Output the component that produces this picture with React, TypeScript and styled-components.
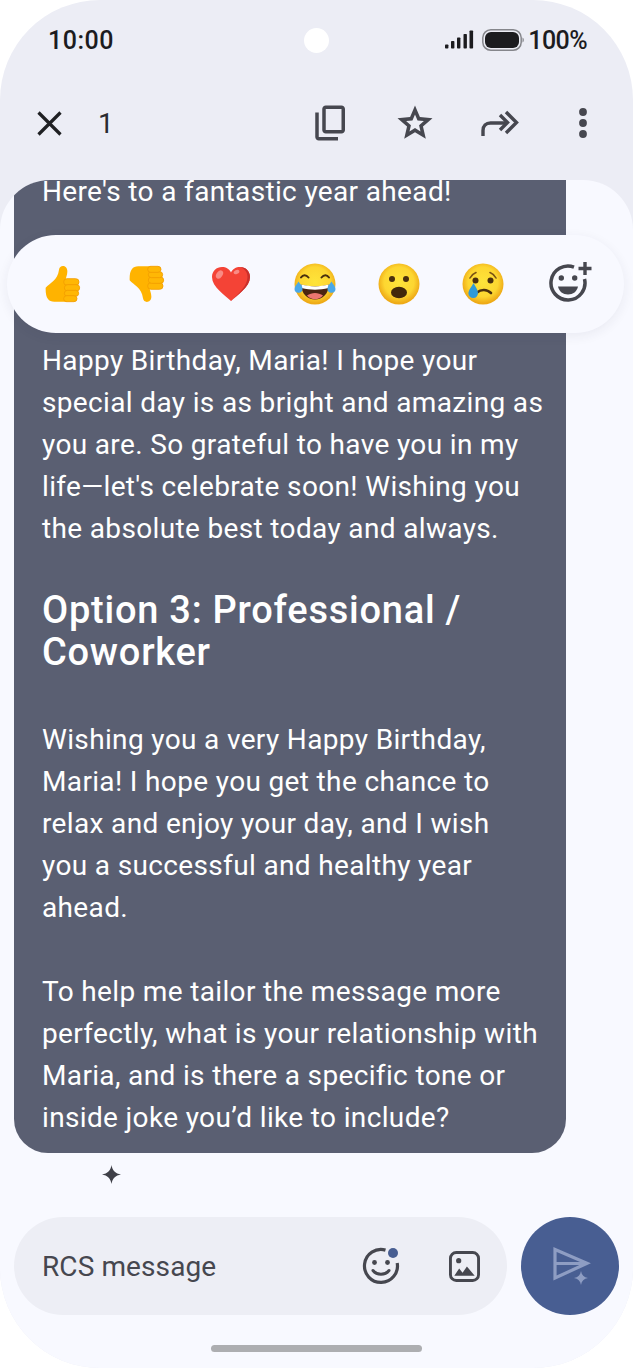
import React from 'react';
import styled, { createGlobalStyle } from 'styled-components';

const GlobalStyle = createGlobalStyle`
  html, body {
    margin: 0;
    padding: 0;
    background: #ffffff;
  }
  * {
    box-sizing: border-box;
  }
`;

const Phone = styled.div`
  width: 633px;
  height: 1368px;
  display: flex;
  flex-direction: column;
  overflow: hidden;
  border-radius: 100px;
  background: #ecedf5;
  font-family: Roboto, 'Noto Sans', sans-serif;
  color: #1c1c1f;
`;

const StatusBar = styled.div`
  height: 80px;
  flex-shrink: 0;
  display: grid;
  grid-template-columns: 1fr 25px 1fr;
  align-items: center;
  padding: 0 46px 0 48px;
  font-size: 25px;
  font-weight: 500;
`;

const Clock = styled.span`
  letter-spacing: 0.5px;
`;

const Camera = styled.div`
  width: 25px;
  height: 25px;
  border-radius: 50%;
  background: #ffffff;
  margin-left: -1px;
`;

const StatusRight = styled.div`
  display: flex;
  align-items: center;
  justify-content: flex-end;
  gap: 7px;
`;

const Percent = styled.span`
  margin-left: -3px;
  letter-spacing: -0.6px;
`;

const ActionBar = styled.div`
  height: 100px;
  flex-shrink: 0;
  display: flex;
  align-items: center;
  padding: 0 8px 14px 37px;
`;

const CountLabel = styled.span`
  margin-left: 36px;
  font-size: 28px;
  flex: 1;
  color: #2a2b30;
`;

const ActionButton = styled.div`
  width: 84px;
  display: flex;
  justify-content: center;
  color: #46474f;
`;

const Panel = styled.div`
  position: relative;
  flex: 1;
  min-height: 0;
  display: flex;
  flex-direction: column;
  overflow: hidden;
  border-radius: 50px 50px 0 0;
  background: #f8f9ff;
`;

const Thread = styled.div`
  flex: 1;
  min-height: 0;
  display: flex;
  flex-direction: column;
  justify-content: flex-end;
  padding: 0 67px 0 14px;
`;

const Bubble = styled.div`
  flex-shrink: 0;
  padding: 0 20px 14px 28px;
  border-radius: 0 0 34px 34px;
  background: #5a5f72;
  color: #ffffff;
  font-size: 28px;
  line-height: 42px;
  letter-spacing: 0.35px;
  white-space: nowrap;
`;

const Paragraph = styled.p<{ $gap?: number }>`
  margin: 0 0 ${(p) => p.$gap ?? 0}px;
`;

const Heading = styled.h2`
  margin: 39px 0 46px;
  font-size: 38px;
  line-height: 42px;
  font-weight: 500;
  letter-spacing: 0.75px;
`;

const ReactionBar = styled.div`
  position: absolute;
  top: 55px;
  left: 7px;
  width: 617px;
  height: 98px;
  display: flex;
  align-items: center;
  padding-left: 14px;
  border-radius: 49px;
  background: #f8f9ff;
  box-shadow: 0 3px 12px rgba(40, 44, 70, 0.07);
`;

const ReactionItem = styled.div`
  width: 84px;
  display: flex;
  justify-content: center;
`;

const AddReactionItem = styled(ReactionItem)`
  padding-left: 8px;
`;

const HintRow = styled.div`
  height: 64px;
  flex-shrink: 0;
  padding: 12px 0 0 102px;
  color: #3f4048;
`;

const Composer = styled.div`
  height: 98px;
  flex-shrink: 0;
  display: flex;
  gap: 14px;
  padding: 0 14px;
`;

const InputPill = styled.div`
  flex: 1;
  display: flex;
  align-items: center;
  padding: 0 27px 0 28px;
  border-radius: 49px;
  background: #edeef5;
  color: #46474f;
  font-size: 28px;
  letter-spacing: 0.1px;
`;

const Placeholder = styled.span`
  flex: 1;
`;

const InputIcons = styled.div`
  display: flex;
  align-items: center;
  gap: 48px;
`;

const SendButton = styled.div`
  width: 98px;
  height: 98px;
  display: flex;
  align-items: center;
  justify-content: center;
  border-radius: 50%;
  background: #485e92;
  color: #8e9dc3;
`;

const HomeBar = styled.div`
  width: 211px;
  height: 7px;
  flex-shrink: 0;
  margin: 30px auto 16px;
  border-radius: 4px;
  background: #adaeb1;
`;

const FlipSvg = styled.svg<{ $flip?: boolean }>`
  display: block;
  transform: ${(p) => (p.$flip ? 'scaleY(-1)' : 'none')};
`;

const SignalIcon = () => (
  <svg width="30" height="20" viewBox="0 0 30 20" fill="#1c1c1f">
    <rect x="0" y="14.5" width="3.4" height="4" rx="0.8" />
    <rect x="6" y="11" width="3.4" height="7.5" rx="0.8" />
    <rect x="12" y="7.5" width="3.4" height="11" rx="0.8" />
    <rect x="18.5" y="4" width="3.4" height="14.5" rx="0.8" />
    <rect x="24.5" y="0.5" width="3.6" height="18" rx="0.8" />
  </svg>
);

const BatteryIcon = () => (
  <svg width="42" height="22" viewBox="0 0 42 22">
    <rect x="0.8" y="0.8" width="38.4" height="20.4" rx="8" fill="none" stroke="#85868b" strokeWidth="1.5" />
    <rect x="3" y="3" width="34" height="16" rx="6" fill="#1c1c1f" />
    <path d="M40.5 8.5c1 .6 1.3 1.5 1.3 2.5s-.3 1.900-1.300 2.500z" fill="#85868b" />
  </svg>
);

const CloseIcon = () => (
  <svg width="25" height="25" viewBox="0 0 25 25" stroke="#1f2023" strokeWidth="3.2" fill="none">
    <path d="M1.500 1.500l22 22M23.500 1.500l-22 22" />
  </svg>
);

const CopyIcon = () => (
  <svg width="42" height="42" viewBox="0 0 24 24" fill="currentColor">
    <path d="M9 18q-.825 0-1.413-.588T7 16V4q0-.825.587-1.413T9 2h9q.825 0 1.413.587T20 4v12q0 .825-.587 1.413T18 18zm0-2h9V4H9zm-4 6q-.825 0-1.413-.588T3 20V6h2v14h11v2z" />
  </svg>
);

const StarIcon = () => (
  <svg width="42" height="42" viewBox="0 0 24 24" fill="currentColor">
    <path d="m8.850 16.825 3.150-1.900 3.150 1.925-.825-3.600 2.775-2.400-3.650-.325-1.450-3.400-1.450 3.375-3.650.325 2.775 2.425zM5.825 21l1.625-7.025L2 9.250l7.200-.625L12 2l2.800 6.625 7.200.625-5.450 4.725L18.175 21 12 17.275z" />
  </svg>
);

const ForwardIcon = () => (
  <svg width="42" height="42" viewBox="0 0 42 42" fill="none" stroke="currentColor" strokeWidth="3.400">
    <path d="M5 34v-5.500C5 24 8 21 12.500 21H28" />
    <path d="M22 13l7.500 7.500L22 28" />
    <path d="M28 10l10.500 10.500L28 31" />
  </svg>
);

const MoreIcon = () => (
  <svg width="42" height="42" viewBox="0 0 42 42" fill="currentColor">
    <circle cx="21" cy="10" r="3.900" />
    <circle cx="21" cy="21" r="3.900" />
    <circle cx="21" cy="32" r="3.900" />
  </svg>
);

const ThumbIcon = ({ flip }: { flip?: boolean }) => (
  <FlipSvg $flip={flip} width="36" height="38" viewBox="46 32 108 114">
    <path
      d="M48 100C60 86 84 78 88 46 90 30 114 32 113 52 113 62 108 70 108 78L112 142H74C56 142 47 130 48 100Z"
      fill="#ffb300"
    />
    <g fill="#ffb705" stroke="#f29c00" strokeWidth="2.500">
      <rect x="102" y="73" width="46" height="20" rx="10" />
      <rect x="104" y="91" width="46" height="19" rx="9.500" />
      <rect x="104" y="108" width="43" height="18" rx="9" />
      <rect x="102" y="124" width="40" height="18" rx="9" />
    </g>
  </FlipSvg>
);

const HeartIcon = () => (
  <svg width="40" height="36" viewBox="0 0 40 36">
    <path
      d="M20 35C14 29 1 21 1 11 1 5 5.500 1 11 1c4 0 7.500 2 9 5.500C21.500 3 25 1 29 1c5.500 0 10 4 10 10 0 10-13 18-19 24Z"
      fill="#f44336"
    />
    <path d="M29 1c5.500 0 10 4 10 10 0 10-13 18-19 24C27 28 36.500 20 36.500 11 36.500 6 33.500 2.500 29 1Z" fill="#c9302c" />
    <ellipse cx="8.500" cy="8.500" rx="3" ry="4.500" transform="rotate(35 8.500 8.500)" fill="#f98b84" />
    <ellipse cx="25.500" cy="6" rx="3" ry="2" transform="rotate(-25 25.500 6)" fill="#f98b84" />
  </svg>
);

const FaceGradient = () => (
  <svg width="0" height="0" style={{ position: 'absolute' }}>
    <defs>
      <radialGradient id="faceFill" cx="50%" cy="45%" r="52%">
        <stop offset="0%" stopColor="#fee43a" />
        <stop offset="70%" stopColor="#fdd631" />
        <stop offset="100%" stopColor="#eeaa17" />
      </radialGradient>
    </defs>
  </svg>
);

const JoyIcon = () => (
  <svg width="46" height="42" viewBox="-2 0 46 42">
    <circle cx="21" cy="21" r="20.500" fill="url(#faceFill)" />
    <path d="M7 14.500c2-3 5-3.200 7.500 0M27.500 14.500c2.500-3.200 5.500-3 7.500 0" fill="none" stroke="#4a2f0e" strokeWidth="2" strokeLinecap="round" />
    <path d="M7 21.500c9 2.500 19 2.500 28 0-.5 9.500-6.500 15-14 15S7.500 31 7 21.500Z" fill="#4a2511" />
    <path d="M7.300 21.600c9 2.400 18.500 2.400 27.400 0l-.3 3.500c-8.800 2.200-18 2.200-26.800 0Z" fill="#ffffff" />
    <path d="M13 32.500c4.500-3.500 11.500-3.500 16 0-2.300 2.500-5 3.800-8 3.800S15.300 35 13 32.500Z" fill="#ed7770" />
    <path d="M4.500 18.500c1.800 2.700 4 4.500 4 7a4 4 0 0 1-8 .5C.5 23.500 3 21 4.500 18.500Z" fill="#4aa8e8" />
    <path d="M37.500 18.500c-1.800 2.700-4 4.500-4 7a4 4 0 0 0 8 .5c0-2.500-2.500-5-4-7.500Z" fill="#4aa8e8" />
  </svg>
);

const WowIcon = () => (
  <svg width="42" height="42" viewBox="0 0 42 42">
    <circle cx="21" cy="21" r="20.500" fill="url(#faceFill)" />
    <circle cx="14" cy="16" r="3" fill="#4a2f0e" />
    <circle cx="28" cy="16" r="3" fill="#4a2f0e" />
    <ellipse cx="21" cy="29.500" rx="8" ry="5.800" fill="#42280b" />
  </svg>
);

const SadIcon = () => (
  <svg width="42" height="42" viewBox="0 0 42 42">
    <circle cx="21" cy="21" r="20.500" fill="url(#faceFill)" />
    <path d="M8 15c1.500-3 3.500-4.500 6-5.500M34 15c-1.500-3-3.500-4.500-6-5.500" fill="none" stroke="#7a5314" strokeWidth="1.600" strokeLinecap="round" />
    <circle cx="13.500" cy="17.500" r="3" fill="#4a2f0e" />
    <circle cx="28.500" cy="17.500" r="3" fill="#4a2f0e" />
    <path d="M15 29.500c4-3.500 10-3.500 14 .5" fill="none" stroke="#4a2f0e" strokeWidth="2.600" strokeLinecap="round" />
    <path d="M11.500 20c1.700 3.500 4.500 6.500 4.500 10a4.800 4.800 0 0 1-9.600.5c0-3.500 3.400-7 5.100-10.500Z" fill="#2f9ad8" />
  </svg>
);

const AddReactionIcon = () => (
  <svg width="44" height="44" viewBox="0 0 44 44" fill="none" stroke="#46474f">
    <path d="M25 5.100A17 17 0 1 0 35.500 17" strokeWidth="3.500" />
    <circle cx="12.300" cy="16" r="2.700" fill="#46474f" stroke="none" />
    <circle cx="25.700" cy="16" r="2.700" fill="#46474f" stroke="none" />
    <path d="M9 24.500h20c-1 5-5 8-10 8s-9-3-10-8Z" fill="#46474f" stroke="none" />
    <path d="M36 0v13M29.500 6.500h13" strokeWidth="3.400" />
  </svg>
);

const SparkleIcon = ({ size }: { size: number }) => (
  <svg width={size} height={size} viewBox="0 0 20 20" fill="currentColor">
    <path d="M10 0c.900 5.800 4.200 9.100 10 10-5.800.900-9.100 4.200-10 10-.900-5.800-4.200-9.100-10-10 5.800-.900 9.100-4.200 10-10Z" />
  </svg>
);

const EmojiPickerIcon = () => (
  <svg width="40" height="40" viewBox="0 0 40 40" fill="none" stroke="#46474f">
    <path d="M24.500 4.100A16.500 16.500 0 1 0 36.200 17" strokeWidth="3.200" />
    <circle cx="13.500" cy="16.500" r="2.400" fill="#46474f" stroke="none" />
    <circle cx="26.500" cy="16.500" r="2.400" fill="#46474f" stroke="none" />
    <path d="M12 24.500c4 5 12 5 16 0" strokeWidth="3" strokeLinecap="round" />
    <circle cx="32" cy="7" r="5" fill="#485e92" stroke="none" />
  </svg>
);

const ImageIcon = () => (
  <svg width="31" height="31" viewBox="0 0 32 32" fill="#46474f">
    <rect x="1.500" y="1.500" width="29" height="29" rx="6" fill="none" stroke="#46474f" strokeWidth="3" />
    <circle cx="10" cy="10" r="2.700" />
    <path d="M5.500 25.500l5-7.500 3.500 4.500 4.500-6.500 8 9.500Z" />
  </svg>
);

const SendIcon = () => (
  <svg width="44" height="44" viewBox="0 0 44 44" fill="none" stroke="currentColor" strokeWidth="3.200">
    <path d="M7 5.500l32 13.800L7 34Z" />
    <path d="M7 19.500h30" />
    <g transform="translate(26 27)" stroke="none">
      <SparkleIcon size={14} />
    </g>
  </svg>
);

const App: React.FC = () => (
  <>
    <GlobalStyle />
    <FaceGradient />
    <Phone>
      <StatusBar>
        <Clock>10:00</Clock>
        <Camera />
        <StatusRight>
          <SignalIcon />
          <BatteryIcon />
          <Percent>100%</Percent>
        </StatusRight>
      </StatusBar>
      <ActionBar>
        <CloseIcon />
        <CountLabel>1</CountLabel>
        <ActionButton><CopyIcon /></ActionButton>
        <ActionButton><StarIcon /></ActionButton>
        <ActionButton><ForwardIcon /></ActionButton>
        <ActionButton><MoreIcon /></ActionButton>
      </ActionBar>
      <Panel>
        <Thread>
          <Bubble>
            <Paragraph $gap={127}>Here's to a fantastic year ahead!</Paragraph>
            <Paragraph>
              Happy Birthday, Maria! I hope your
              <br />
              special day is as bright and amazing as
              <br />
              you are. So grateful to have you in my
              <br />
              life—let's celebrate soon! Wishing you
              <br />
              the absolute best today and always.
            </Paragraph>
            <Heading>
              Option 3: Professional /
              <br />
              Coworker
            </Heading>
            <Paragraph $gap={42}>
              Wishing you a very Happy Birthday,
              <br />
              Maria! I hope you get the chance to
              <br />
              relax and enjoy your day, and I wish
              <br />
              you a successful and healthy year
              <br />
              ahead.
            </Paragraph>
            <Paragraph>
              To help me tailor the message more
              <br />
              perfectly, what is your relationship with
              <br />
              Maria, and is there a specific tone or
              <br />
              inside joke you’d like to include?
            </Paragraph>
          </Bubble>
        </Thread>
        <HintRow>
          <SparkleIcon size={19} />
        </HintRow>
        <Composer>
          <InputPill>
            <Placeholder>RCS message</Placeholder>
            <InputIcons>
              <EmojiPickerIcon />
              <ImageIcon />
            </InputIcons>
          </InputPill>
          <SendButton>
            <SendIcon />
          </SendButton>
        </Composer>
        <HomeBar />
        <ReactionBar>
          <ReactionItem><ThumbIcon /></ReactionItem>
          <ReactionItem><ThumbIcon flip /></ReactionItem>
          <ReactionItem><HeartIcon /></ReactionItem>
          <ReactionItem><JoyIcon /></ReactionItem>
          <ReactionItem><WowIcon /></ReactionItem>
          <ReactionItem><SadIcon /></ReactionItem>
          <AddReactionItem><AddReactionIcon /></AddReactionItem>
        </ReactionBar>
      </Panel>
    </Phone>
  </>
);

export default App;
